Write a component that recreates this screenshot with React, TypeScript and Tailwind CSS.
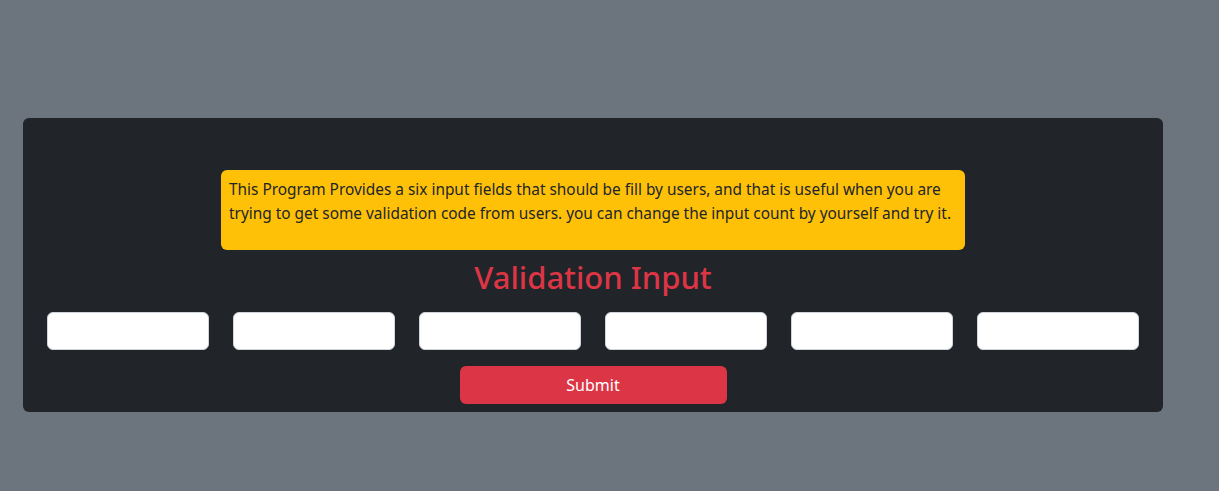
import { useState } from "react";

const INPUT_COUNT = 6;

const App = () => {
    const [values, setValues] = useState<string[]>(Array(INPUT_COUNT).fill(""));

    const changeHandle = (index: number, value: string) => {
        const updated = [...values];
        updated[index] = value;
        setValues(updated);
    };

    return (
        <div
            className="min-h-screen w-full bg-[#6c757d] pt-[118px] pl-[23px]"
            style={{ fontFamily: '"Noto Sans", "Open Sans", sans-serif' }}
        >
            <div className="w-[1140px] rounded-md bg-[#212529] px-3 pt-[52px] pb-[8px]">
                <div className="mx-auto w-[744px] rounded-md bg-[#ffc107] p-2 text-[15.4px] leading-6 text-[#212529]">
                    <p className="mb-4 whitespace-nowrap">
                        This Program Provides a six input fields that should be fill by users, and that is useful when you are
                        <br />
                        trying to get some validation code from users. you can change the input count by yourself and try it.
                    </p>
                </div>
                <h2 className="mt-[8px] text-center text-[31px] font-medium leading-[38px] text-[#dc3545]">
                    Validation Input
                </h2>
                <div className="mt-[16px] grid grid-cols-6">
                    {values.map((value, index) => (
                        <div key={index} className="px-3">
                            <input
                                type="text"
                                value={value}
                                onChange={(e) => changeHandle(index, e.target.value)}
                                className="block h-[38px] w-full rounded-md border border-[#ced4da] bg-white px-3 text-[16px] text-[#212529] outline-none"
                            />
                        </div>
                    ))}
                </div>
                <div className="mt-4 flex justify-center">
                    <button className="h-[38px] w-[267px] rounded-md bg-[#dc3545] text-[16px] text-white">
                        Submit
                    </button>
                </div>
            </div>
        </div>
    );
};

export default App;
